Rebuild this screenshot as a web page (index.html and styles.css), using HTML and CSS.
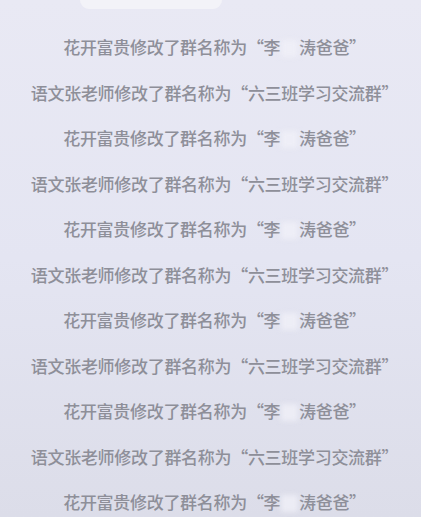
FILE: index.html
```html
<!DOCTYPE html>
<html lang="zh-CN">
<head>
<meta charset="utf-8">
<link rel="stylesheet" href="styles.css">
</head>
<body>
<div class="screen">
  <div class="bubble-tail"></div>
  <div class="notices">
    <p class="notice">花开富贵修改了群名称为“李<span class="blur">某</span>涛爸爸”</p>
    <p class="notice">语文张老师修改了群名称为“六三班学习交流群”</p>
    <p class="notice">花开富贵修改了群名称为“李<span class="blur">某</span>涛爸爸”</p>
    <p class="notice">语文张老师修改了群名称为“六三班学习交流群”</p>
    <p class="notice">花开富贵修改了群名称为“李<span class="blur">某</span>涛爸爸”</p>
    <p class="notice">语文张老师修改了群名称为“六三班学习交流群”</p>
    <p class="notice">花开富贵修改了群名称为“李<span class="blur">某</span>涛爸爸”</p>
    <p class="notice">语文张老师修改了群名称为“六三班学习交流群”</p>
    <p class="notice">花开富贵修改了群名称为“李<span class="blur">某</span>涛爸爸”</p>
    <p class="notice">语文张老师修改了群名称为“六三班学习交流群”</p>
    <p class="notice">花开富贵修改了群名称为“李<span class="blur">某</span>涛爸爸”</p>
  </div>
</div>
</body>
</html>
```
FILE: styles.css
```css
html, body {
  margin: 0;
  padding: 0;
}
body {
  width: 421px;
  height: 517px;
  overflow: hidden;
  background: #e5e6f2;
}
.screen {
  height: 517px;
  overflow: hidden;
  background: linear-gradient(180deg, #e9e9f4 0%, #e4e5f2 50%, #dcdde9 100%);
  font-family: "Noto Sans CJK SC", "Noto Sans", sans-serif;
}
.bubble-tail {
  width: 142px;
  height: 9px;
  margin-left: 80px;
  background: #f3f3f8;
  border-radius: 0 0 14px 14px;
}
.notices {
  display: flex;
  flex-direction: column;
  align-items: center;
  padding-top: 15px;
  padding-left: 8px;
}
.notice {
  margin: 0;
  height: 45.5px;
  line-height: 45.5px;
  font-size: 17px;
  font-weight: 500;
  color: #8e8f99;
  white-space: nowrap;
  letter-spacing: -0.3px;
}
.blur {
  display: inline-block;
  width: 1em;
  height: 1em;
  line-height: 1em;
  vertical-align: -0.12em;
  color: transparent;
  background: rgba(240, 240, 248, 0.8);
  filter: blur(2.5px);
  margin: 0 0.05em;
}
```
